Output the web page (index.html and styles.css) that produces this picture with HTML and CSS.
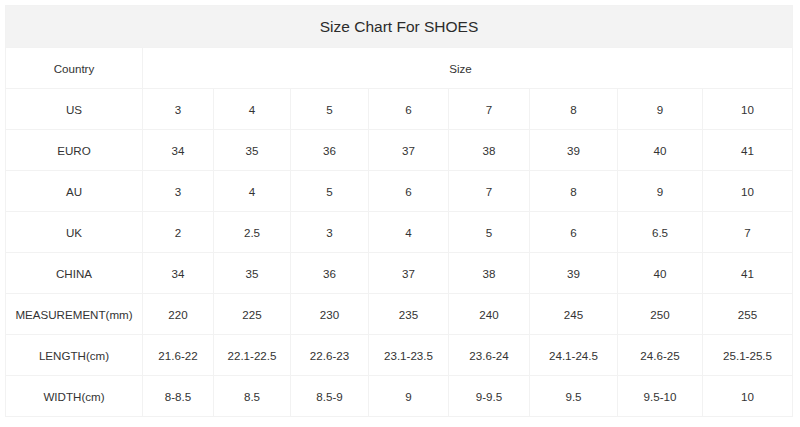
FILE: index.html
```html
<!DOCTYPE html>
<html>
<head>
<meta charset="utf-8">
<link rel="stylesheet" href="styles.css">
</head>
<body>
<table class="chart">
  <colgroup>
    <col class="c0"><col class="c1"><col class="c2"><col class="c3"><col class="c4"><col class="c5"><col class="c6"><col class="c7"><col class="c8">
  </colgroup>
  <thead>
    <tr><th colspan="9" class="title">Size Chart For SHOES</th></tr>
  </thead>
  <tbody>
    <tr><td>Country</td><td colspan="8" class="size-head">Size</td></tr>
    <tr><td>US</td><td>3</td><td>4</td><td>5</td><td>6</td><td>7</td><td>8</td><td>9</td><td>10</td></tr>
    <tr><td>EURO</td><td>34</td><td>35</td><td>36</td><td>37</td><td>38</td><td>39</td><td>40</td><td>41</td></tr>
    <tr><td>AU</td><td>3</td><td>4</td><td>5</td><td>6</td><td>7</td><td>8</td><td>9</td><td>10</td></tr>
    <tr><td>UK</td><td>2</td><td>2.5</td><td>3</td><td>4</td><td>5</td><td>6</td><td>6.5</td><td>7</td></tr>
    <tr><td>CHINA</td><td>34</td><td>35</td><td>36</td><td>37</td><td>38</td><td>39</td><td>40</td><td>41</td></tr>
    <tr><td>MEASUREMENT(mm)</td><td>220</td><td>225</td><td>230</td><td>235</td><td>240</td><td>245</td><td>250</td><td>255</td></tr>
    <tr><td>LENGTH(cm)</td><td>21.6-22</td><td>22.1-22.5</td><td>22.6-23</td><td>23.1-23.5</td><td>23.6-24</td><td>24.1-24.5</td><td>24.6-25</td><td>25.1-25.5</td></tr>
    <tr><td>WIDTH(cm)</td><td>8-8.5</td><td>8.5</td><td>8.5-9</td><td>9</td><td>9-9.5</td><td>9.5</td><td>9.5-10</td><td>10</td></tr>
  </tbody>
</table>
</body>
</html>
```
FILE: styles.css
```css
html, body {
  margin: 0;
  padding: 0;
  background: #ffffff;
}
body {
  padding: 5px 0 0 5px;
  font-family: "Liberation Sans", Arial, sans-serif;
  color: #333333;
}
.chart {
  border-collapse: collapse;
  table-layout: fixed;
  width: 787px;
}
.c0 { width: 137px; }
.c1 { width: 71px; }
.c2 { width: 77px; }
.c3 { width: 78px; }
.c4 { width: 80px; }
.c5 { width: 81px; }
.c6 { width: 88px; }
.c7 { width: 85px; }
.c8 { width: 90px; }
.chart th,
.chart td {
  border: 1px solid #f2f2f2;
  text-align: center;
  padding: 0;
  white-space: nowrap;
}
.chart .title {
  background: #f3f3f3;
  height: 41px;
  font-size: 15.5px;
  font-weight: normal;
  color: #2b2b2b;
}
.chart td {
  height: 40px;
  font-size: 11.6px;
  color: #333333;
}
.chart .size-head {
  padding-right: 14px;
}
```
